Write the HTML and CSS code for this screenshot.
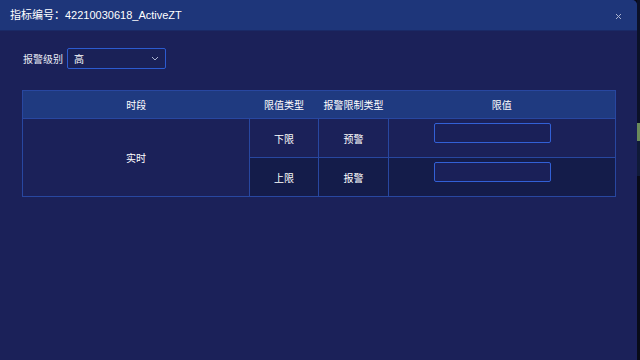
FILE: index.html
```html
<!DOCTYPE html>
<html lang="zh">
<head>
<meta charset="utf-8">
<link rel="stylesheet" href="styles.css">
</head>
<body>
<div class="dialog">
  <div class="header">
    <span class="title">指标编号：42210030618_ActiveZT</span>
    <svg class="close" width="7" height="7" viewBox="0 0 7 7"><path d="M1 1L6 6M6 1L1 6" stroke="#a9b2cf" stroke-width="1" fill="none"/></svg>
  </div>
  <div class="content">
    <div class="form-row">
      <span class="label">报警级别</span>
      <div class="select">
        <span>高</span>
        <svg width="8" height="5" viewBox="0 0 8 5"><path d="M1 1L4 4L7 1" stroke="#aab2d0" stroke-width="1" fill="none"/></svg>
      </div>
    </div>
    <table class="grid">
      <colgroup><col class="c1"><col class="c2"><col class="c3"><col class="c4"></colgroup>
      <thead>
        <tr><th>时段</th><th>限值类型</th><th>报警限制类型</th><th>限值</th></tr>
      </thead>
      <tbody>
        <tr class="r1">
          <td rowspan="2" class="period">实时</td><td>下限</td><td>预警</td>
          <td class="val"><div class="input"></div></td>
        </tr>
        <tr class="r2">
          <td>上限</td><td>报警</td>
          <td class="val"><div class="input"></div></td>
        </tr>
      </tbody>
    </table>
  </div>
</div>
<div class="strip">
  <div class="s1"></div><div class="s2"></div><div class="s3"></div>
</div>
</body>
</html>
```
FILE: styles.css
```css
html, body { margin: 0; padding: 0; }
body {
  width: 640px; height: 360px; overflow: hidden;
  background: #080b18;
  display: flex;
  font-family: "Liberation Sans", "Noto Sans CJK SC", sans-serif;
  color: #fff;
}
.dialog {
  width: 637px; height: 360px;
  background: #1b2159;
  border-top-right-radius: 5px;
  overflow: hidden;
  display: flex; flex-direction: column;
}
.header {
  height: 31px; flex: none;
  background: #1e367a;
  border-bottom: 1px solid #1a2a66;
  box-sizing: border-box;
  display: flex; align-items: center; justify-content: space-between;
  padding: 0 15px 0 10px;
}
.title { font-size: 11px; margin-top: -2px; }
.close { margin-top: 2px; }
.content { padding: 17px 0 0 22px; }
.form-row { display: flex; align-items: center; }
.label { font-size: 10px; margin-left: 1px; margin-right: 4px; color: #e8ebf5; }
.select {
  width: 99px; height: 21px; box-sizing: border-box;
  border: 1px solid #2c5bd0; border-radius: 2px;
  background: #1a2157;
  display: flex; align-items: center; justify-content: space-between;
  padding: 0 6px 0 6px;
  font-size: 10px;
}
.grid {
  margin-top: 21px;
  width: 593px;
  border-collapse: collapse;
  table-layout: fixed;
  border: 1px solid #2847a0;
  font-size: 10px;
}
.c1 { width: 227px; } .c2 { width: 69px; } .c3 { width: 70px; } .c4 { width: 227px; }
th {
  height: 27px; padding: 0; font-weight: normal;
  background: #1f3a80;
  border-bottom: 1px solid #2847a0;
  text-align: center;
}
td {
  height: 38px; padding: 0; text-align: center;
  border: 1px solid #2847a0;
}
.r1 td { background: #1b2159; }
.r2 td { background: #141c4a; }
td.period { background: #1b2159; }
td.val { text-align: left; vertical-align: top; }
.input {
  margin: 4px 0 0 45px;
  width: 117px; height: 20px; box-sizing: border-box;
  border: 1px solid #3260d6; border-radius: 2px;
  background: #1a2058;
}
.strip { width: 3px; display: flex; flex-direction: column; }
.s1 { height: 123px; background: #0b1128; }
.s2 { height: 18px; background: #6a8a5a; }
.s3 { height: 35px; background: #101a38; }
```
